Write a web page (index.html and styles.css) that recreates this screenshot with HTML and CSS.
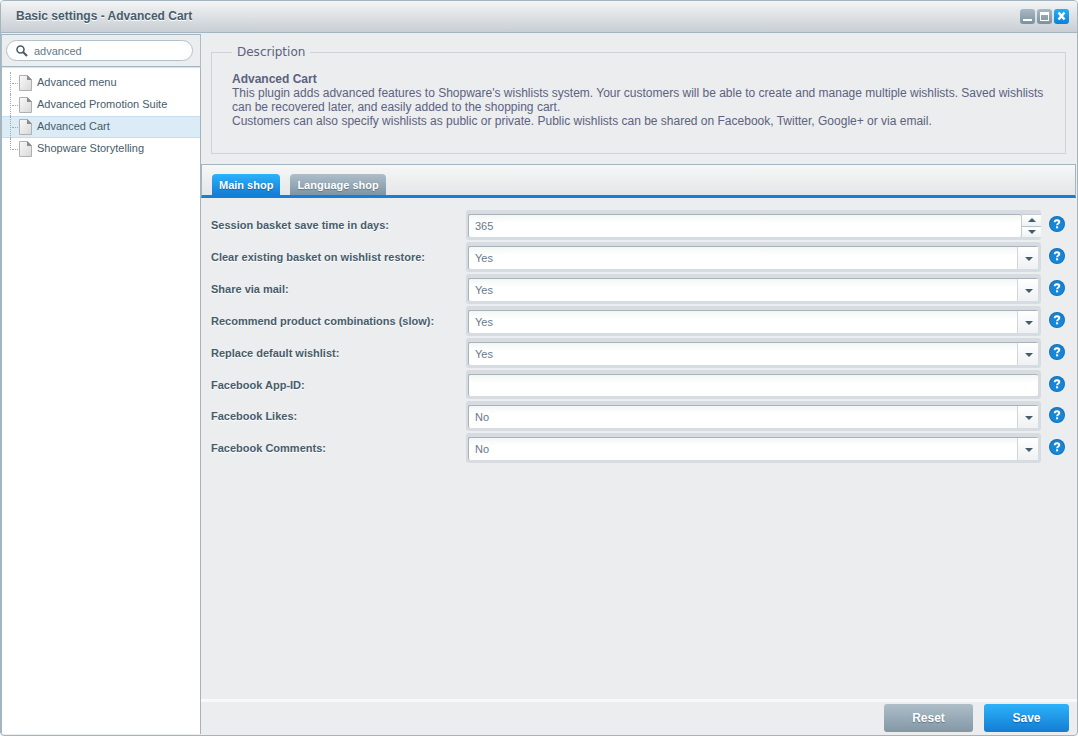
FILE: index.html
```html
<!DOCTYPE html>
<html lang="en">
<head>
<meta charset="utf-8">
<title>Basic settings - Advanced Cart</title>
<link rel="stylesheet" href="styles.css">
</head>
<body>
<svg class="defs" aria-hidden="true">
  <defs>
    <linearGradient id="page-fill" x1="0" y1="0" x2="1" y2="1"><stop offset="0" stop-color="#fafafa"/><stop offset="1" stop-color="#d8d8d8"/></linearGradient>
    <linearGradient id="help-fill" x1="0" y1="0" x2="0" y2="1"><stop offset="0" stop-color="#1a80cf"/><stop offset="1" stop-color="#1689da"/></linearGradient>
    <symbol id="page" viewBox="0 0 13 16"><path d="M.5.5h8l4 4v11H.5z" fill="url(#page-fill)" stroke="#b0b0b0"/><path d="M8 0l5 5H8z" fill="#8c8c8c"/></symbol>
    <symbol id="help" viewBox="0 0 16 16"><circle cx="8" cy="8" r="8" fill="#0f6fb8"/><circle cx="8" cy="8" r="7" fill="url(#help-fill)"/><path d="M5.700 6.200c0-1.300.9-2 2.300-2s2.300.7 2.300 1.900c0 1.500-2.200 1.500-2.200 3.200" fill="none" stroke="#fff" stroke-width="1.900"/><rect x="7.100" y="10.300" width="2" height="2" fill="#fff"/></symbol>
  </defs>
</svg>
<div class="window">
  <header class="titlebar">
    <h1>Basic settings - Advanced Cart</h1>
    <div class="tools">
      <button class="tool" aria-label="Minimize"><svg width="15" height="15"><rect x="3" y="10" width="9" height="2" fill="#fff"/></svg></button>
      <button class="tool" aria-label="Maximize"><svg width="15" height="15"><path d="M3 3h9v9H3zM4 6v5h7V6z" fill="#fff" fill-rule="evenodd"/></svg></button>
      <button class="tool close" aria-label="Close"><svg width="15" height="15"><path d="M4.500 3.500l6 7M10.500 3.500l-6 7" stroke="#fff" stroke-width="2.600"/></svg></button>
    </div>
  </header>
  <div class="body">
    <aside class="sidebar">
      <div class="search">
        <svg class="lens" width="12" height="12" viewBox="0 0 12 12"><circle cx="4.500" cy="4.500" r="3.500" fill="none" stroke="#475c6a" stroke-width="1.600"/><path d="M7 7l4 4" stroke="#475c6a" stroke-width="2.200"/></svg>
        <input type="text" value="advanced" aria-label="Search">
      </div>
      <ul class="tree">
        <li><svg width="13" height="16"><use href="#page"/></svg>Advanced menu</li>
        <li><svg width="13" height="16"><use href="#page"/></svg>Advanced Promotion Suite</li>
        <li class="selected"><svg width="13" height="16"><use href="#page"/></svg>Advanced Cart</li>
        <li><svg width="13" height="16"><use href="#page"/></svg>Shopware Storytelling</li>
      </ul>
    </aside>
    <main class="main">
      <fieldset class="description">
        <legend>Description</legend>
        <strong>Advanced Cart</strong>
        <p>This plugin adds advanced features to Shopware's wishlists system. Your customers will be able to create and manage multiple wishlists. Saved wishlists can be recovered later, and easily added to the shopping cart.</p>
        <p>Customers can also specify wishlists as public or private. Public wishlists can be shared on Facebook, Twitter, Google+ or via email.</p>
      </fieldset>
      <div class="tabs" role="tablist">
        <button class="tab active" role="tab" aria-selected="true">Main shop</button>
        <button class="tab" role="tab" aria-selected="false">Language shop</button>
      </div>
      <form class="form">
        <div class="row"><label for="days">Session basket save time in days:</label>
          <div class="field number"><input id="days" type="text" value="365"><div class="spinner"><button type="button" aria-label="Increase"><svg width="8" height="4"><path d="M0 4l4-4 4 4z" fill="#475c6a"/></svg></button><button type="button" aria-label="Decrease"><svg width="8" height="4"><path d="M0 0h8L4 4z" fill="#475c6a"/></svg></button></div></div>
          <svg class="help" width="16" height="16"><use href="#help"/></svg></div>
        <div class="row"><label for="clear">Clear existing basket on wishlist restore:</label>
          <div class="field combo"><select id="clear"><option>Yes</option><option>No</option></select></div>
          <svg class="help" width="16" height="16"><use href="#help"/></svg></div>
        <div class="row"><label for="mail">Share via mail:</label>
          <div class="field combo"><select id="mail"><option>Yes</option><option>No</option></select></div>
          <svg class="help" width="16" height="16"><use href="#help"/></svg></div>
        <div class="row"><label for="combi">Recommend product combinations (slow):</label>
          <div class="field combo"><select id="combi"><option>Yes</option><option>No</option></select></div>
          <svg class="help" width="16" height="16"><use href="#help"/></svg></div>
        <div class="row"><label for="replace">Replace default wishlist:</label>
          <div class="field combo"><select id="replace"><option>Yes</option><option>No</option></select></div>
          <svg class="help" width="16" height="16"><use href="#help"/></svg></div>
        <div class="row plain"><label for="appid">Facebook App-ID:</label>
          <div class="field"><input id="appid" type="text"></div>
          <svg class="help" width="16" height="16"><use href="#help"/></svg></div>
        <div class="row"><label for="likes">Facebook Likes:</label>
          <div class="field combo"><select id="likes"><option>No</option><option>Yes</option></select></div>
          <svg class="help" width="16" height="16"><use href="#help"/></svg></div>
        <div class="row"><label for="comments">Facebook Comments:</label>
          <div class="field combo"><select id="comments"><option>No</option><option>Yes</option></select></div>
          <svg class="help" width="16" height="16"><use href="#help"/></svg></div>
      </form>
      <footer class="footer">
        <button class="btn">Reset</button>
        <button class="btn primary">Save</button>
      </footer>
    </main>
  </div>
</div>
</body>
</html>
```
FILE: styles.css
```css
* { box-sizing: border-box; }
body { margin: 0; background: #fff; font-family: "Liberation Sans", Arial, sans-serif; font-size: 11px; color: #475c6a; }
button, input, select { font: inherit; margin: 0; padding: 0; border: 0; }
.defs { position: absolute; width: 0; height: 0; }

.window { min-height: 100vh; display: flex; flex-direction: column; border: 1px solid #a4b5c0; border-radius: 4px; background: #ebedef; overflow: hidden; }
.titlebar { height: 32px; display: flex; align-items: center; justify-content: space-between; padding: 0 8px 2px 15px; border-bottom: 1px solid #a4b5c0; background: linear-gradient(#f3f4f5, #c8ced4); }
.titlebar h1 { margin: 0; font-size: 12px; line-height: 16px; text-shadow: 0 1px 0 #fff; }
.tools { display: flex; gap: 2px; padding-top: 2px; }
.tool { width: 15px; height: 15px; display: block; border-radius: 3px; background: linear-gradient(#a9b9c4, #7b919f); }
.tool svg { display: block; }
.tool.close { background: linear-gradient(#1fb0fb, #0c80d8); }

.body { flex: 1; display: flex; padding: 1px 0; }
.sidebar { width: 200px; flex: none; display: flex; flex-direction: column; border: solid #a4b5c0; border-width: 1px 1px 0; background: #fff; }
.search { position: relative; padding: 5px 7px 5px 4px; height: 32px; border-bottom: 1px solid #a4b5c0; background: #ebedef; box-shadow: 0 1px 1px #dde2e6; }
.search input { width: 100%; height: 21px; padding: 0 12px 0 27px; border: 1px solid #b3c1cb; border-radius: 11px; background: #fff; color: #65798a; outline: 0; }
.lens { position: absolute; left: 14px; top: 10px; }
.tree { list-style: none; margin: 5px 0 0; padding: 0; }
.tree li { position: relative; height: 22px; display: flex; align-items: center; gap: 5px; padding: 0 0 2px 17px; border: solid transparent; border-width: 1px 0; }
.tree li svg { margin-top: 2px; }
.tree li.selected { background: #dcecf6; border-color: #c9dcea; }
.tree li::before { content: ""; position: absolute; left: 8px; top: -1px; height: 22px; border-left: 1px dotted #a8a8a8; }
.tree li::after { content: ""; position: absolute; left: 10px; top: 10px; width: 6px; border-top: 1px dotted #a8a8a8; }
.tree li:last-child::before { height: 12px; }

.main { flex: 1; min-width: 0; display: flex; flex-direction: column; }
.description { margin: 10px 11px 10px 10px; padding: 12px 20px 25px; border: 1px solid #ccd3d9; font-size: 12px; line-height: 14px; color: #5c6280; min-width: 0; }
.description legend { padding: 0 5px; font-family: "DejaVu Sans", Verdana, sans-serif; line-height: 16px; }
.description p { margin: 0; }
.tabs { height: 34px; display: flex; align-items: flex-end; gap: 10px; padding: 0 10px; margin-right: 1px; border: solid #a4b5c0; border-width: 1px 1px 0 1px; border-bottom: 3px solid #167ed6; background: linear-gradient(#f6f7f7, #e4e6e7); }
.tab { height: 21px; padding: 0 7px; border-radius: 4px 4px 0 0; color: #fff; font-weight: bold; background: linear-gradient(#aebec9, #7f95a4); text-shadow: 0 1px 1px #5f7482; }
.tab.active { background: linear-gradient(#2db2fa, #137dd4); text-shadow: 0 1px 1px #0d5fae; }

.form { flex: 1; display: flex; flex-direction: column; gap: 2px; padding: 12px 12px 0 10px; }
.row { height: 30px; display: grid; grid-template-columns: 255px 1fr 16px; column-gap: 0; align-items: center; }
.row.plain { height: 29px; }
.row label { font-weight: bold; text-shadow: 0 1px 0 #fff; }
.row .help { margin-bottom: 2px; }
.field { height: 100%; display: flex; padding: 4px 3px 3px 2px; margin-right: 8px; border-radius: 3px; background: #d6dce1; }
.field input, .field select { flex: 1; min-width: 0; height: 100%; padding: 0 6px 1px; border: solid #a8b3ba; border-width: 1px 0 0 1px; border-radius: 2px; background: linear-gradient(#f4f6f6, #fff 8px); color: #65798a; outline: 0; appearance: none; }
.combo { position: relative; }
.combo::before { content: ""; position: absolute; right: 3px; top: 5px; bottom: 3px; width: 20px; border: solid #d0d7dc; border-width: 0 0 0 1px; background: linear-gradient(#fff, #eff1f2); pointer-events: none; }
.combo::after { content: ""; position: absolute; right: 8px; top: 15px; border: 4px solid transparent; border-top-color: #475c6a; border-bottom: 0; pointer-events: none; }
.number { padding-right: 0; }
.spinner { width: 20px; display: flex; flex-direction: column; border-left: 1px solid #c5cdd3; border-top: 1px solid #c5cdd3; }
.spinner button { flex: 1; display: flex; align-items: center; justify-content: center; background: linear-gradient(#fff, #eff1f2); }
.spinner button + button { border-top: 1px solid #b8c1c8; }

.footer { display: flex; justify-content: flex-end; gap: 11px; padding: 2px 8px 2px; border-top: 3px solid #f8f9fa; }
.btn { width: 89px; height: 28px; border-radius: 3px; color: #fff; font-size: 12px; font-weight: bold; background: linear-gradient(#aebec9, #8297a5); text-shadow: 0 1px 1px #5f7482; }
.btn.primary { width: 85px; background: linear-gradient(#2db2fa, #137dd4); text-shadow: 0 1px 1px #0d5fae; }
```
